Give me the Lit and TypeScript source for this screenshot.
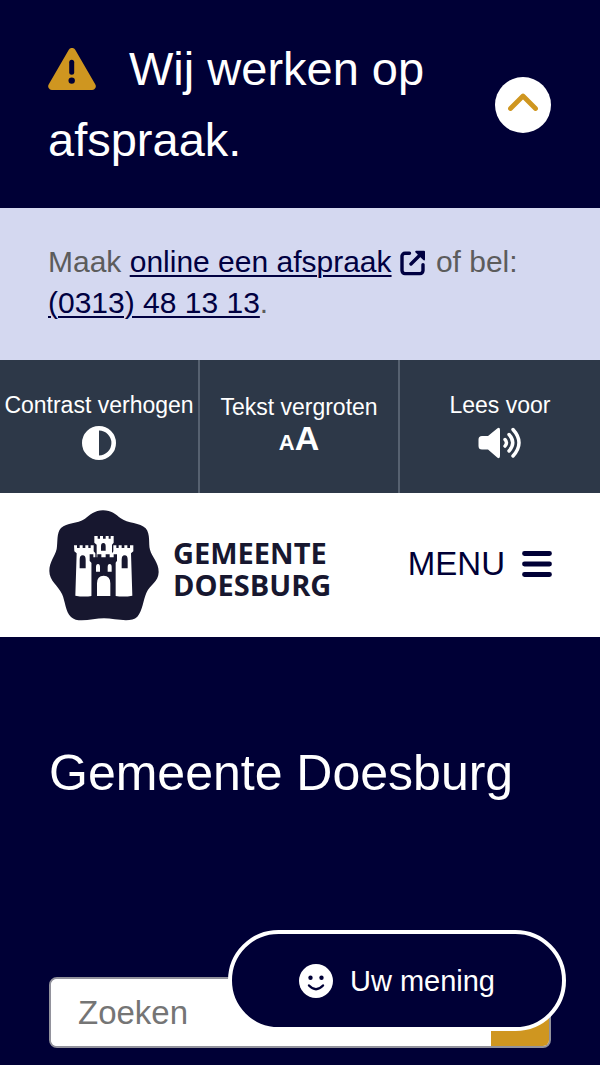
import { LitElement, html, css, svg } from "lit";
import { customElement, state } from "lit/decorators.js";

const warningIcon = svg`<svg class="warning" viewBox="0 0 48 42" aria-hidden="true">
  <path fill="#cf9620" d="M20.8 1.8a3.7 3.7 0 0 1 6.4 0L47.2 36.3A3.7 3.7 0 0 1 44 42H4A3.7 3.7 0 0 1 .8 36.3Z"/>
  <path stroke="#000036" stroke-width="5" stroke-linecap="round" d="M23.7 14.2v10"/>
  <circle cx="23.7" cy="32.6" r="3.2" fill="#000036"/>
</svg>`;

const externalIcon = svg`<svg class="external" viewBox="0 0 26 26" aria-hidden="true">
  <path fill="none" stroke="currentColor" stroke-width="3.4" stroke-linecap="round" stroke-linejoin="round" d="M9.5 3.2H5a3 3 0 0 0-3 3V20.600a3 3 0 0 0 3 3h15a3 3 0 0 0 3-3v-6M11 14 20 5"/>
  <path fill="currentColor" d="M16.2 .8H24a1 1 0 0 1 1 1v7.600c0 1-1 1.300-1.700.6L15.600 2.600c-.7-.7-.4-1.800.6-1.800Z"/>
</svg>`;

const emblem = svg`<svg class="emblem" viewBox="26 29 330 333" aria-hidden="true">
  <path fill="#17172f" d="M188 30C213 30 227 43 240 53C262 70 300 66 316 84C331 101 324 130 329 148C335 171 355 185 355 215C355 244 329 253 318 278C308 301 307 331 291 349C271 369 224 354 191 354C158 354 112 370 92 350C75 334 75 303 65 281C53 255 27 242 27 212C27 184 44 169 49 146C53 126 48 98 62 83C80 65 110 72 134 55C149 44 163 30 188 30Z"/>
  <path fill="#fff" d="M162 107h10v8h7v-8h9v8h8v-8h9v8h6v-8h9v20l-5 6v42h-46v-42l-7-6Z"/>
  <path fill="#fff" d="M101 135h9v8h8v-8h9v8h8v-8h9v8h7v-8h9v18l5 6v20l-11 2v106q-24 4-49-1l4-127-7-6Z"/>
  <path fill="#fff" d="M219 135h9v8h7v-8h9v8h8v-8h9v8h8v-8h10v18l-7 6 4 127q-25 5-50 1V181l-11-2v-20l4-6Z"/>
  <path fill="#17172f" d="M148 162h11v9h12v-9h12v9h13v-9h12v9h12v-9h10v20l-6 6v103h-70V188l-6-6Z"/>
  <path fill="#17172f" d="M182 151v-13q0-10 7-10t7 10v13ZM118 204v-26q0-13 9-13t9 13v26ZM244 204v-26q0-13 9-13t9 13v26Z"/>
  <path fill="#fff" d="M167 214v-14q0-9 6-9t6 9v14ZM202 214v-14q0-9 6-9t6 9v14ZM170 287v-38q0-23 20-23t20 23v38Z"/>
</svg>`;

@customElement("app-root")
export class AppRoot extends LitElement {
  static styles = css`
    :host {
      display: block;
      min-height: 100vh;
      background: #000036;
      color: #fff;
      font-family: "Liberation Sans", Arial, sans-serif;
    }
    * { box-sizing: border-box; }
    svg { display: block; flex: none; }
    button { font: inherit; color: inherit; border: 0; background: none; padding: 0; cursor: pointer; }
    h1, h2, p { margin: 0; font-weight: 400; }

    .notice {
      display: flex;
      align-items: center;
      justify-content: space-between;
      gap: 24px;
      padding: 33px 49px 33px 48px;
    }
    .notice-title { font-size: 47px; line-height: 71px; }
    .warning { display: inline-block; width: 48px; height: 42px; margin-right: 33px; vertical-align: -5px; }
    .toggle {
      flex: none;
      display: grid;
      place-items: center;
      width: 56px;
      height: 56px;
      margin-top: 2px;
      padding-bottom: 6px;
      border-radius: 50%;
      background: #fff;
    }
    .chevron { width: 30px; height: 18px; }

    .message {
      padding: 33px 48px 37px;
      background: #d4d8f0;
      color: #5c5c5c;
      font-size: 30px;
      line-height: 41px;
    }
    .message a { color: #000041; text-decoration-thickness: 2px; text-underline-offset: 3px; }
    .external { display: inline-block; width: 26px; height: 26px; margin: 0 2px 0 8px; vertical-align: -4px; color: #000041; }

    .tools { display: grid; grid-template-columns: repeat(3, 1fr); background: #2d3848; }
    .tool {
      display: flex;
      flex-direction: column;
      align-items: center;
      height: 133px;
      padding-top: 32px;
      font-size: 23px;
      line-height: 26px;
      white-space: nowrap;
    }
    .tool:not(:last-child) { border-right: 2px solid #566170; }
    .tool-text { padding-top: 34px; }
    .contrast { width: 34px; height: 34px; margin-top: 8px; }
    .speaker { width: 44px; height: 32px; margin-top: 9px; }
    .letters { font-size: 22px; font-weight: 700; line-height: 36px; }
    .letters-big { font-size: 34px; }

    .header {
      display: flex;
      align-items: center;
      justify-content: space-between;
      padding: 17px 48px 16px 49px;
      background: #fff;
      color: #000036;
    }
    .brand { display: flex; align-items: center; gap: 14px; color: #17172f; text-decoration: none; }
    .emblem { width: 110px; height: 111px; }
    .name { padding-top: 6px; font: 700 29px/32px "Open Sans", "Noto Sans", sans-serif; }
    .name-line { display: block; }
    .menu { display: flex; align-items: center; gap: 17px; padding-bottom: 4px; font-size: 33px; line-height: 40px; }
    .bars { width: 30px; height: 26px; }

    .hero { padding: 106px 49px 17px; }
    .hero-title { font-size: 50px; line-height: 60px; }
    .search {
      display: flex;
      height: 71px;
      margin-top: 174px;
      border: 2px solid #92929c;
      border-radius: 8px;
      background: #fff;
      overflow: hidden;
    }
    .field {
      flex: 1;
      min-width: 0;
      padding: 0 27px;
      border: 0;
      outline: 0;
      background: #fff;
      font: 33px "Liberation Sans", Arial, sans-serif;
    }
    .field::placeholder { color: #757575; opacity: 1; }
    .submit { width: 58px; background: #cf9620; display: grid; place-items: center; }
    .lens { width: 28px; height: 28px; }

    .feedback {
      position: fixed;
      right: 34px;
      bottom: 34px;
      display: flex;
      align-items: center;
      gap: 17px;
      height: 101px;
      padding: 0 67px;
      border: 4px solid #fff;
      border-radius: 51px;
      background: #000036;
      font-size: 29px;
      line-height: 36px;
      white-space: nowrap;
    }
    .smiley { width: 34px; height: 34px; }
  `;

  @state() private open = true;

  private toggle() {
    this.open = !this.open;
  }

  render() {
    return html`
      <section class="notice">
        <h2 class="notice-title">${warningIcon}Wij werken op afspraak.</h2>
        <button class="toggle" aria-label="Melding in- of uitklappen" aria-expanded=${this.open} @click=${this.toggle}>
          <svg class="chevron" viewBox="0 0 30 18"><path d="M2.5 15.5 15 3l12.5 12.5" fill="none" stroke="#cf9620" stroke-width="4.8" stroke-linecap="round" stroke-linejoin="round"/></svg>
        </button>
      </section>
      ${this.open
        ? html`<p class="message">Maak <a href="#afspraak">online een afspraak</a>${externalIcon} of bel: <a href="tel:0313481313">(0313) 48 13 13</a>.</p>`
        : null}
      <div class="tools">
        <button class="tool">Contrast verhogen
          <svg class="contrast" viewBox="0 0 34 34"><circle cx="17" cy="17" r="14.7" fill="none" stroke="#fff" stroke-width="4.6"/><path d="M17 1a16 16 0 0 0 0 32Z" fill="#fff"/></svg>
        </button>
        <button class="tool tool-text">Tekst vergroten
          <span class="letters" aria-hidden="true">A<span class="letters-big">A</span></span>
        </button>
        <button class="tool">Lees voor
          <svg class="speaker" viewBox="0 0 44 32">
            <path fill="#fff" d="M4 9h6L19.5 1.2Q22 0 22 3v26q0 3-2.5 1.8L10 22.5H4q-3.5 0-3.500-3.500v-6.500Q.5 9 4 9Z"/>
            <path fill="none" stroke="#fff" stroke-width="3.4" stroke-linecap="round" d="M27 12.5q3 3.300 0 6.600M31 7.500q7.500 8.200 0 16.500M35 2.500q12 13.200 0 26.500"/>
          </svg>
        </button>
      </div>
      <header class="header">
        <a class="brand" href="#home">${emblem}<span class="name"><span class="name-line">GEMEENTE</span><span class="name-line">DOESBURG</span></span></a>
        <button class="menu">MENU
          <svg class="bars" viewBox="0 0 30 26"><path d="M2.500 2.500h25M2.500 13h25M2.500 23.500h25" stroke="#000036" stroke-width="4.800" stroke-linecap="round"/></svg>
        </button>
      </header>
      <main class="hero">
        <h1 class="hero-title">Gemeente Doesburg</h1>
        <form class="search" role="search" @submit=${(e: Event) => e.preventDefault()}>
          <input class="field" type="text" aria-label="Zoeken" placeholder="Zoeken" />
          <button class="submit" aria-label="Zoek">
            <svg class="lens" viewBox="0 0 28 28"><path d="M18 18l8 8M20 11a9 9 0 1 1-18 0a9 9 0 0 1 18 0Z" fill="none" stroke="#000036" stroke-width="3"/></svg>
          </button>
        </form>
      </main>
      <button class="feedback">
        <svg class="smiley" viewBox="0 0 34 34"><circle cx="17" cy="17" r="17" fill="#fff"/><circle cx="11.5" cy="13.7" r="2.2" fill="#000036"/><circle cx="22.5" cy="13.7" r="2.2" fill="#000036"/><path d="M10 21.500q7 7.500 14 0" fill="none" stroke="#000036" stroke-width="2.4" stroke-linecap="round"/></svg>
        Uw mening
      </button>
    `;
  }
}
